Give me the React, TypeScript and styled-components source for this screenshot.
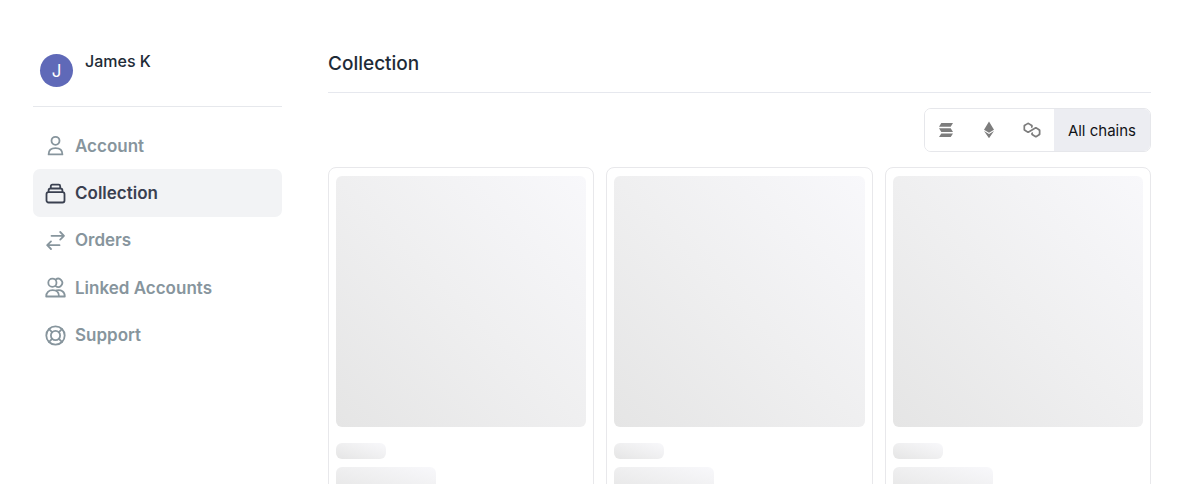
import React from "react";
import styled, { createGlobalStyle } from "styled-components";

const GlobalStyle = createGlobalStyle`
  *, *::before, *::after { box-sizing: border-box; }
  body {
    margin: 0;
    background: #ffffff;
    color: #1e2b37;
    font-family: Inter, "Liberation Sans", sans-serif;
  }
  h1, p, ul { margin: 0; padding: 0; }
`;

const Shell = styled.div`
  display: flex;
  gap: 46px;
  height: calc(100vh - 10px);
  padding: 44px 29px 0 33px;
  overflow: hidden;
`;

const Sidebar = styled.aside`
  flex: 0 0 249px;
`;

const Profile = styled.div`
  display: flex;
  align-items: flex-start;
  gap: 12px;
  height: 63px;
  padding: 0 7px;
  border-bottom: 1px solid #e6e8ec;
`;

const Avatar = styled.span`
  display: flex;
  align-items: center;
  justify-content: center;
  width: 33px;
  height: 33px;
  margin-top: 10px;
  border-radius: 50%;
  background: #5f69b8;
  color: #ffffff;
  font-size: 17px;
`;

const UserName = styled.p`
  padding-top: 4px;
  font-size: 16px;
  font-weight: 500;
  line-height: 26px;
`;

const NavList = styled.ul`
  display: grid;
  grid-template-rows: repeat(5, 1fr);
  height: 237px;
  margin-top: 15px;
  list-style: none;
`;

const NavLink = styled.a<{ $active?: boolean }>`
  display: flex;
  align-items: center;
  gap: 9px;
  height: 100%;
  padding: 0 12px;
  border-radius: 7px;
  background: ${(p) => (p.$active ? "#f2f3f5" : "transparent")};
  color: ${(p) => (p.$active ? "#3a4050" : "#87959d")};
  font-size: 17px;
  font-weight: 600;
  text-decoration: none;
`;

const NavIcon = styled.svg`
  flex: none;
  width: 21px;
  height: 21px;
  fill: none;
  stroke: currentColor;
  stroke-width: 1.8;
  stroke-linecap: round;
  stroke-linejoin: round;
`;

const Main = styled.main`
  flex: 1;
  min-width: 0;
`;

const Title = styled.h1`
  height: 49px;
  padding-top: 6px;
  border-bottom: 1px solid #e6e8ee;
  font-size: 19px;
  font-weight: 500;
  line-height: 28px;
`;

const Toolbar = styled.div`
  display: flex;
  justify-content: flex-end;
  padding: 15px 0;
`;

const ChainFilter = styled.div`
  display: flex;
  height: 44px;
  border: 1px solid #e6e7eb;
  border-radius: 7px;
  overflow: hidden;
`;

const ChainButton = styled.button<{ $selected?: boolean }>`
  display: flex;
  align-items: center;
  justify-content: center;
  min-width: 43px;
  padding: 0 ${(p) => (p.$selected ? "14px" : "0")};
  border: 0;
  background: ${(p) => (p.$selected ? "#ecedf2" : "#ffffff")};
  color: ${(p) => (p.$selected ? "#111318" : "#7d7d7d")};
  font: 400 15px Inter, "Liberation Sans", sans-serif;
  cursor: pointer;
`;

const ChainIcon = styled.svg`
  width: 18px;
  height: 18px;
  fill: currentColor;
`;

const CardGrid = styled.div`
  display: grid;
  grid-template-columns: repeat(3, minmax(0, 1fr));
  gap: 12px;
`;

const Card = styled.article`
  padding: 8px 7px;
  border: 1px solid #e8e8eb;
  border-radius: 8px;
`;

const Skeleton = styled.div`
  border-radius: 6px;
  background: linear-gradient(to top right, #e5e5e5, #efeff0 50%, #f8f8fb);
`;

const ArtSkeleton = styled(Skeleton)`
  height: 251px;
  margin-bottom: 16px;
`;

const LineSkeleton = styled(Skeleton)<{ $size: "small" | "large" }>`
  width: ${(p) => (p.$size === "small" ? "20%" : "40%")};
  height: ${(p) => (p.$size === "small" ? "16px" : "28px")};
  margin-bottom: 8px;
`;

const navItems = [
  {
    label: "Account",
    icon: (
      <>
        <circle cx="10.5" cy="5.8" r="4" />
        <path d="M3.6 19.4c0-3.9 2.7-6.3 6.9-6.3s6.9 2.4 6.9 6.3z" />
      </>
    ),
  },
  {
    label: "Collection",
    active: true,
    icon: (
      <>
        <rect x="1.5" y="9.2" width="18" height="10.3" rx="2" />
        <path d="M3.6 9V7.2a1.7 1.7 0 0 1 1.7-1.7h10.400a1.7 1.7 0 0 1 1.700 1.700V9M5.800 5.200V3.200a1.500 1.500 0 0 1 1.500-1.500h6.400a1.500 1.500 0 0 1 1.500 1.500v2" />
      </>
    ),
  },
  {
    label: "Orders",
    icon: <path d="M6.5 5.8H19M15.200 2l3.800 3.800-3.800 3.800M14.500 15.200H2.200M6 11.400l-3.800 3.800L6 19" />,
  },
  {
    label: "Linked Accounts",
    icon: (
      <>
        <circle cx="7.400" cy="5.800" r="4.100" />
        <path d="M10.700 2.500a4.100 4.100 0 1 1 0 6.600" />
        <path d="M1.200 19.500c0-4 2.500-6.300 6.400-6.300s6.400 2.300 6.400 6.300zM11.500 13.400c4.700-1 8.300 1.200 8.300 6.100H14" />
      </>
    ),
  },
  {
    label: "Support",
    icon: (
      <>
        <circle cx="10.500" cy="10.500" r="9.200" />
        <circle cx="10.500" cy="10.500" r="4.600" />
        <path d="M4.100 4.100l3.200 3.200M16.900 4.100l-3.200 3.200M4.100 16.900l3.200-3.200M16.900 16.900l-3.200-3.200" />
      </>
    ),
  },
];

const chains = [
  {
    name: "Solana",
    viewBox: "0 0 18 18",
    icon: <path d="M4.300 2H16l-2.300 3.700H2zM2 7.200h11.700L16 10.900H4.300zM4.300 12.400H16l-2.300 3.700H2z" />,
  },
  {
    name: "Ethereum",
    viewBox: "0 0 18 18",
    icon: <path d="M9 .5l5 8.300-5 3-5-3zM4 10l5 3 5-3-5 7.300z" />,
  },
  {
    name: "Polygon",
    viewBox: "-1 -3.500 40.400 40.400",
    icon: (
      <path d="M29 10.200c-.7-.4-1.600-.4-2.400 0L21 13.500l-3.800 2.100-5.500 3.300c-.7.4-1.600.4-2.400 0L5 16.300c-.7-.4-1.200-1.200-1.200-2.100v-5c0-.8.4-1.600 1.200-2.100l4.300-2.500c.7-.4 1.600-.4 2.400 0L16 7.200c.7.4 1.200 1.200 1.200 2.100v3.300l3.800-2.200V7c0-.8-.4-1.600-1.200-2.100l-8-4.700c-.7-.4-1.600-.4-2.400 0L1.200 5C.4 5.400 0 6.200 0 7v9.400c0 .8.4 1.600 1.200 2.100l8.100 4.700c.7.4 1.600.4 2.400 0l5.500-3.200 3.800-2.200 5.500-3.200c.7-.4 1.600-.4 2.400 0l4.300 2.500c.7.4 1.200 1.200 1.200 2.100v5c0 .8-.4 1.600-1.200 2.100L29 28.800c-.7.4-1.600.4-2.400 0l-4.300-2.500c-.7-.4-1.200-1.200-1.200-2.100V21l-3.800 2.200v3.300c0 .8.4 1.600 1.200 2.100l8.100 4.700c.7.4 1.600.4 2.400 0l8.100-4.700c.7-.4 1.200-1.200 1.200-2.100V17c0-.8-.4-1.600-1.200-2.100L29 10.200z" />
    ),
  },
];

export default function App() {
  return (
    <>
      <GlobalStyle />
      <Shell>
        <Sidebar>
          <Profile>
            <Avatar>J</Avatar>
            <UserName>James K</UserName>
          </Profile>
          <nav aria-label="Profile">
            <NavList>
              {navItems.map((item) => (
                <li key={item.label}>
                  <NavLink
                    href="#"
                    $active={item.active}
                    aria-current={item.active ? "page" : undefined}
                  >
                    <NavIcon viewBox="0 0 21 21" aria-hidden="true">
                      {item.icon}
                    </NavIcon>
                    {item.label}
                  </NavLink>
                </li>
              ))}
            </NavList>
          </nav>
        </Sidebar>
        <Main>
          <Title>Collection</Title>
          <Toolbar>
            <ChainFilter role="group" aria-label="Chain">
              {chains.map((chain) => (
                <ChainButton key={chain.name} type="button" aria-label={chain.name}>
                  <ChainIcon viewBox={chain.viewBox} aria-hidden="true">
                    {chain.icon}
                  </ChainIcon>
                </ChainButton>
              ))}
              <ChainButton type="button" $selected aria-pressed="true">
                All chains
              </ChainButton>
            </ChainFilter>
          </Toolbar>
          <CardGrid aria-busy="true">
            {[0, 1, 2].map((slot) => (
              <Card key={slot}>
                <ArtSkeleton />
                <LineSkeleton $size="small" />
                <LineSkeleton $size="large" />
              </Card>
            ))}
          </CardGrid>
        </Main>
      </Shell>
    </>
  );
}
